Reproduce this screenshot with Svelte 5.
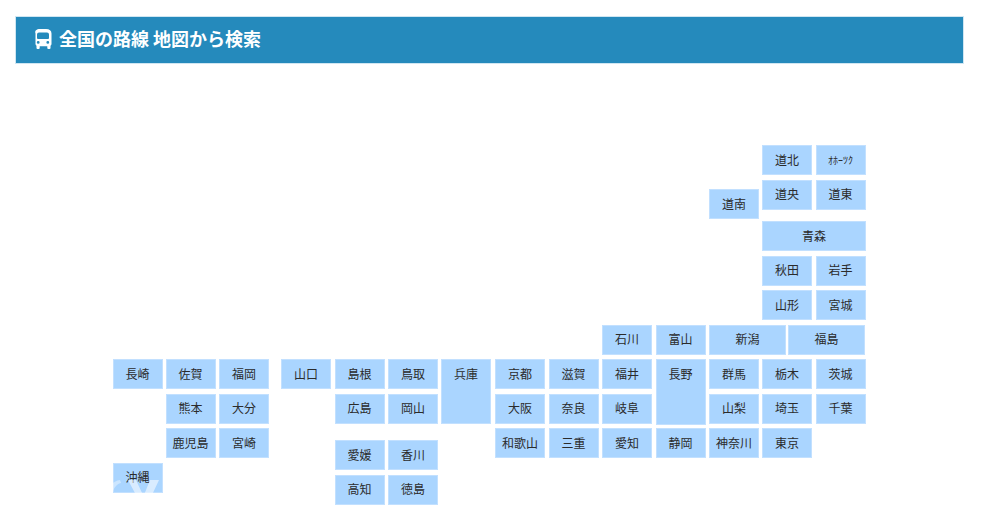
<script>
	// x, y = top left of the cell on the map, in px
	const cols = [112.5, 165.5, 219, 281, 334.5, 388, 441, 495, 548.5, 602, 655.5, 709, 762, 815.5];

	const prefs = [
		{ name: "道北", x: 762, y: 145 },
		{ name: "ｵﾎｰﾂｸ", x: 815.5, y: 145, small: true },
		{ name: "道央", x: 762, y: 179.5 },
		{ name: "道東", x: 815.5, y: 179.5 },
		{ name: "道南", x: 709, y: 189 },
		{ name: "青森", x: 762, y: 221, w: 104 },
		{ name: "秋田", x: 762, y: 255.5 },
		{ name: "岩手", x: 815.5, y: 255.5 },
		{ name: "山形", x: 762, y: 290 },
		{ name: "宮城", x: 815.5, y: 290 },
		{ name: "石川", x: 602, y: 324.5 },
		{ name: "富山", x: 655.5, y: 324.5 },
		{ name: "新潟", x: 709, y: 324.5, w: 77 },
		{ name: "福島", x: 788, y: 324.5, w: 77 },
		{ name: "長崎", x: cols[0], y: 359 },
		{ name: "佐賀", x: cols[1], y: 359 },
		{ name: "福岡", x: cols[2], y: 359 },
		{ name: "山口", x: cols[3], y: 359 },
		{ name: "島根", x: cols[4], y: 359 },
		{ name: "鳥取", x: cols[5], y: 359 },
		{ name: "兵庫", x: cols[6], y: 359, h: 65, top: true },
		{ name: "京都", x: cols[7], y: 359 },
		{ name: "滋賀", x: cols[8], y: 359 },
		{ name: "福井", x: cols[9], y: 359 },
		{ name: "長野", x: cols[10], y: 359, h: 66, top: true },
		{ name: "群馬", x: cols[11], y: 359 },
		{ name: "栃木", x: cols[12], y: 359 },
		{ name: "茨城", x: cols[13], y: 359 },
		{ name: "熊本", x: cols[1], y: 393.5 },
		{ name: "大分", x: cols[2], y: 393.5 },
		{ name: "広島", x: cols[4], y: 393.5 },
		{ name: "岡山", x: cols[5], y: 393.5 },
		{ name: "大阪", x: cols[7], y: 393.5 },
		{ name: "奈良", x: cols[8], y: 393.5 },
		{ name: "岐阜", x: cols[9], y: 393.5 },
		{ name: "山梨", x: cols[11], y: 393.5 },
		{ name: "埼玉", x: cols[12], y: 393.5 },
		{ name: "千葉", x: cols[13], y: 393.5 },
		{ name: "鹿児島", x: cols[1], y: 428 },
		{ name: "宮崎", x: cols[2], y: 428 },
		{ name: "和歌山", x: cols[7], y: 428 },
		{ name: "三重", x: cols[8], y: 428 },
		{ name: "愛知", x: cols[9], y: 428 },
		{ name: "静岡", x: cols[10], y: 428 },
		{ name: "神奈川", x: cols[11], y: 428 },
		{ name: "東京", x: cols[12], y: 428 },
		{ name: "愛媛", x: cols[4], y: 440 },
		{ name: "香川", x: cols[5], y: 440 },
		{ name: "高知", x: cols[4], y: 474.5 },
		{ name: "徳島", x: cols[5], y: 474.5 },
		{ name: "沖縄", x: cols[0], y: 462.5 }
	];
</script>

<div class="page">
	<h2 class="title">
		<svg class="bus" viewBox="0 0 18 20" width="18" height="20">
			<path fill="#fff" fill-rule="evenodd" d="M6 0h6c3.500 0 5.500 1.500 5.500 4.500V15c0 .8-.4 1.400-1 1.700V19a1 1 0 0 1-1 1h-1.200a1 1 0 0 1-1-1v-1.800H5.700V19a1 1 0 0 1-1 1H3.500a1 1 0 0 1-1-1v-2.300c-.6-.3-1-.9-1-1.700V4.500C.5 1.500 2.500 0 6 0ZM5 3.500a2 2 0 0 0-2 2V9a1 1 0 0 0 1 1h10a1 1 0 0 0 1-1V5.500a2 2 0 0 0-2-2ZM4.200 12a1.400 1.400 0 1 0 0 2.800 1.400 1.400 0 0 0 0-2.800Zm9.600 0a1.400 1.400 0 1 0 0 2.800 1.400 1.400 0 0 0 0-2.800Z" />
		</svg>
		<span>全国の路線 地図から検索</span>
	</h2>

	<div class="map">
		{#each prefs as p}
			<a
				class="pref"
				class:top={p.top}
				class:small={p.small}
				href="#top"
				style="left:{p.x}px;top:{p.y}px;width:{p.w ?? 50}px;height:{p.h ?? 30}px"
			>{p.name}</a>
		{/each}

		<!-- faint watermark lying over the Okinawa cell -->
		<svg class="mark" viewBox="0 0 60 20" width="60" height="20">
			<path fill="#fff" fill-opacity="0.4" d="M0 20C1 12 7 6 14 5l1 3C10 9 7 14 6 20Z" />
			<path fill="#fff" fill-opacity="0.55" d="M22 5h8l7 15h-7ZM38 20l6-15h9l-7 15Z" />
		</svg>
	</div>
</div>

<style>
	:global(body) {
		background: #fff;
	}

	.page {
		position: relative;
		width: 1000px;
		height: 517px;
		overflow: hidden;
		padding-top: 16px;
		box-sizing: border-box;
		font-family: "Noto Sans CJK JP", "Liberation Sans", sans-serif;
	}

	.title {
		display: flex;
		align-items: center;
		gap: 7px;
		width: 949px;
		height: 48px;
		margin: 0 0 0 15px;
		padding: 0 0 4px 18px;
		box-sizing: border-box;
		background: #258abc;
		border: 1px solid #cfe6f2;
		color: #fff;
		font-size: 18px;
		font-weight: 700;
	}

	.bus {
		margin-top: 1px;
	}

	.map {
		position: absolute;
		inset: 0;
		pointer-events: none;
	}

	.pref {
		position: absolute;
		display: flex;
		align-items: center;
		justify-content: center;
		box-sizing: border-box;
		padding-bottom: 2px;
		background: #aad5ff;
		border: 1px solid #c2e0ff;
		color: #2b2b2b;
		font-size: 12px;
		text-decoration: none;
	}

	.pref.top {
		align-items: flex-start;
		padding: 5px 0 0;
	}

	.pref.small {
		font-size: 10px;
	}

	.mark {
		position: absolute;
		left: 106px;
		top: 475px;
	}
</style>
